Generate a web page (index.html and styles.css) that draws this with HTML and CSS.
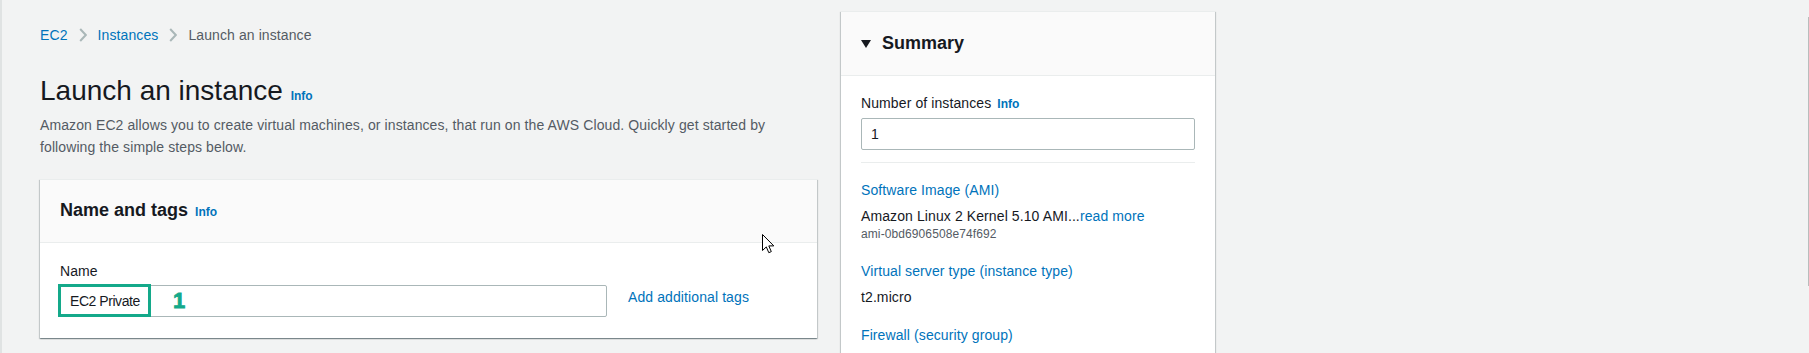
FILE: index.html
```html
<!DOCTYPE html>
<html lang="en">
<head>
<meta charset="utf-8">
<title>Launch an instance | EC2</title>
<link rel="stylesheet" href="styles.css">
</head>
<body>
<div class="app">
  <div class="layout">
    <main class="main">
      <nav class="breadcrumbs">
        <a class="crumb">EC2</a>
        <span class="chev"><svg width="8" height="14" viewBox="0 0 8 14"><path d="M1.2 1 L6.8 7 L1.2 13" fill="none" stroke="#aab7b8" stroke-width="2"/></svg></span>
        <a class="crumb">Instances</a>
        <span class="chev"><svg width="8" height="14" viewBox="0 0 8 14"><path d="M1.2 1 L6.8 7 L1.2 13" fill="none" stroke="#aab7b8" stroke-width="2"/></svg></span>
        <span class="crumb-current">Launch an instance</span>
      </nav>
      <h1 class="page-title">Launch an instance <a class="info">Info</a></h1>
      <p class="page-desc">Amazon EC2 allows you to create virtual machines, or instances, that run on the AWS Cloud. Quickly get started by<br>following the simple steps below.</p>

      <section class="card">
        <div class="card-header">
          <h2 class="card-title">Name and tags <a class="info">Info</a></h2>
        </div>
        <div class="card-body">
          <div class="field-label">Name</div>
          <div class="name-row">
            <div class="input-wrap">
              <div class="text-input name-input">EC2 Private</div>
              <span class="highlight"></span>
              <span class="step">1</span>
            </div>
            <a class="link add-tags">Add additional tags</a>
          </div>
        </div>
      </section>
    </main>

    <aside class="summary">
      <div class="summary-header">
        <span class="caret"><svg width="10" height="8" viewBox="0 0 10 8"><path d="M0 0 H10 L5 8 Z" fill="#16191f"/></svg></span>
        <h2 class="card-title">Summary</h2>
      </div>
      <div class="summary-body">
        <div class="field-label">Number of instances <a class="info">Info</a></div>
        <div class="text-input count-input">1</div>
        <div class="divider"></div>
        <div class="sum-item">
          <a class="link">Software Image (AMI)</a>
          <div class="sum-value">Amazon Linux 2 Kernel 5.10 AMI...<a class="link">read more</a></div>
          <div class="sum-sub">ami-0bd6906508e74f692</div>
        </div>
        <div class="sum-item">
          <a class="link">Virtual server type (instance type)</a>
          <div class="sum-value">t2.micro</div>
        </div>
        <div class="sum-item">
          <a class="link">Firewall (security group)</a>
        </div>
      </div>
    </aside>
  </div>
  <div class="scrollbar"></div>
  <svg class="cursor" width="13" height="20" viewBox="0 0 13 20"><path d="M0.5 0.5 L0.5 16.5 L4.3 12.9 L6.8 18.7 L9.3 17.6 L6.8 11.9 L11.8 11.9 Z" fill="#fff" stroke="#000" stroke-width="1" stroke-linejoin="round"/></svg>
</div>
</body>
</html>
```

FILE: styles.css
```css
html, body {
  margin: 0;
  height: 100%;
  overflow: hidden;
}
body {
  background: #f2f3f3;
  font-family: "Liberation Sans", Arial, sans-serif;
  font-size: 14px;
  line-height: 22px;
  letter-spacing: 0.1px;
  color: #16191f;
}
a {
  color: #0073bb;
  text-decoration: none;
}
.app {
  position: relative;
  height: 100%;
  border-left: 2px solid #e0e3e3;
}
.layout {
  display: flex;
  align-items: flex-start;
  gap: 24px;
  padding: 11px 0 0 38px;
}
.main {
  width: 777px;
  flex: none;
}
.breadcrumbs {
  display: flex;
  align-items: center;
  margin-top: 13px;
  height: 22px;
}
.chev {
  display: flex;
  margin: 0 11px 0 11px;
}
.crumb-current {
  color: #545b64;
}
.page-title {
  margin: 27px 0 0;
  font-size: 28px;
  line-height: 36px;
  font-weight: 400;
  letter-spacing: 0;
}
.info {
  font-size: 12px;
  line-height: 12px;
  font-weight: 700;
  letter-spacing: 0;
  margin-left: 2px;
}
.page-title .info {
  margin-left: 0;
}
.page-desc {
  margin: 5px 0 0;
  color: #545b64;
}
.card {
  margin-top: 21px;
  background: #fff;
  border-top: 1px solid #eaeded;
  box-shadow: 0 1px 1px 0 rgba(0, 28, 36, 0.3), 1px 1px 1px 0 rgba(0, 28, 36, 0.15), -1px 1px 1px 0 rgba(0, 28, 36, 0.15);
}
.card-header {
  background: #fafafa;
  border-bottom: 1px solid #eaeded;
  padding: 19px 20px 21px;
}
.card-title {
  margin: 0;
  font-size: 18px;
  line-height: 22px;
  font-weight: 700;
  letter-spacing: 0;
}
.card-body {
  padding: 17px 20px 21px;
}
.field-label {
  line-height: 22px;
}
.name-row {
  display: flex;
  align-items: flex-start;
  gap: 21px;
  margin-top: 3px;
}
.input-wrap {
  position: relative;
  width: 547px;
}
.text-input {
  box-sizing: border-box;
  height: 32px;
  border: 1px solid #aab7b8;
  border-radius: 2px;
  padding: 0 9px;
  line-height: 30px;
  background: #fff;
  color: #16191f;
}
.name-input {
  letter-spacing: -0.45px;
}
.highlight {
  position: absolute;
  left: -2px;
  top: -1px;
  width: 93px;
  height: 33px;
  box-sizing: border-box;
  border: 3px solid #14a98a;
}
.step {
  position: absolute;
  left: 113px;
  top: 5px;
  font-size: 22px;
  line-height: 21px;
  font-weight: 700;
  color: #14a98a;
  -webkit-text-stroke: 0.8px #14a98a;
}
.add-tags {
  margin-top: 1px;
}
.summary {
  width: 374px;
  flex: none;
  background: #fff;
  border-top: 1px solid #eaeded;
  box-shadow: 0 1px 1px 0 rgba(0, 28, 36, 0.3), 1px 1px 1px 0 rgba(0, 28, 36, 0.15), -1px 1px 1px 0 rgba(0, 28, 36, 0.15);
  min-height: 400px;
}
.summary-header {
  display: flex;
  align-items: center;
  gap: 11px;
  background: #fafafa;
  border-bottom: 1px solid #eaeded;
  padding: 20px 20px 21px;
}
.caret {
  display: flex;
  margin-top: 1px;
}
.summary-body {
  padding: 16px 20px;
}
.count-input {
  margin-top: 4px;
}
.divider {
  height: 1px;
  background: #eaeded;
  margin: 12px 0 16px;
}
.sum-item {
  margin-bottom: 16px;
}
.sum-item .link {
  display: block;
}
.sum-value {
  margin-top: 4px;
}
.sum-value .link {
  display: inline;
}
.sum-sub {
  font-size: 12px;
  line-height: 14px;
  color: #545b64;
  padding-bottom: 3px;
}
.scrollbar {
  position: absolute;
  right: 0;
  top: 17px;
  width: 1px;
  height: 269px;
  background: #b9bcbc;
}
.cursor {
  position: absolute;
  left: 760px;
  top: 234px;
}
```
